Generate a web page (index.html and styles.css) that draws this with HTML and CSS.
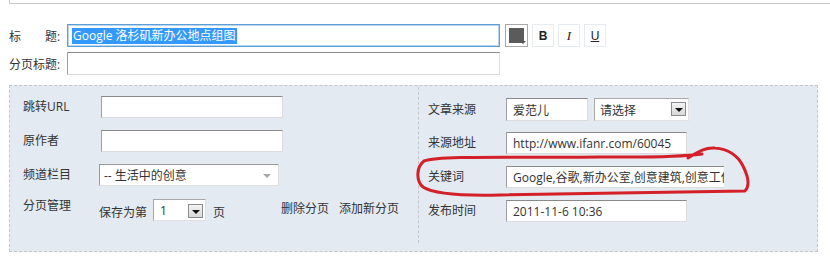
FILE: index.html
```html
<!DOCTYPE html>
<html lang="zh-CN">

<head>
    <meta charset="UTF-8" />
    <title>编辑文章</title>
    <link rel="stylesheet" href="styles.css">
</head>

<body>
    <div class="topbox"></div>

    <div class="head">
        <div class="head-row">
            <label class="head-label">标&emsp;&emsp;题:</label>
            <div class="box title-box"><span class="selected">Google 洛杉矶新办公地点组图</span></div>
            <div class="tools">
                <span class="color-btn"><i></i><b></b></span>
                <span class="fmt-btn bold">B</span>
                <span class="fmt-btn italic">I</span>
                <span class="fmt-btn under">U</span>
            </div>
        </div>
        <div class="head-row">
            <label class="head-label">分页标题:</label>
            <div class="box"></div>
        </div>
    </div>

    <div class="panel">
        <div class="col col-left">
            <div class="row">
                <label>跳转URL</label>
                <div class="box w182"></div>
            </div>
            <div class="row">
                <label>原作者</label>
                <div class="box w182"></div>
            </div>
            <div class="row">
                <label>频道栏目</label>
                <div class="box soft-select">-- 生活中的创意<span class="soft-arrow"></span></div>
            </div>
            <div class="row row-page">
                <label>分页管理</label>
                <div class="page-tools">
                    <span class="txt">保存为第</span>
                    <div class="box win-select page-no">1<span class="drop"></span></div>
                    <span class="txt">页</span>
                    <a class="link first">删除分页</a>
                    <a class="link">添加新分页</a>
                </div>
            </div>
        </div>

        <div class="col col-right">
            <div class="row">
                <label>文章来源</label>
                <div class="pair">
                    <div class="box w82">爱范儿</div>
                    <div class="box win-select source">请选择<span class="drop"></span></div>
                </div>
            </div>
            <div class="row">
                <label>来源地址</label>
                <div class="box w181">http://www.ifanr.com/60045</div>
            </div>
            <div class="row">
                <label>关键词</label>
                <div class="box keywords">Google,谷歌,新办公室,创意建筑,创意工作</div>
            </div>
            <div class="row">
                <label>发布时间</label>
                <div class="box w181">2011-11-6 10:36</div>
            </div>
        </div>

        <!-- 手绘的红圈 -->
        <svg class="mark" width="830" height="257" viewBox="0 0 830 257">
            <path d="M688 158 C698 152 706 147 715 148 C728 149 738 156 743 166 C748 176 750 186 745 191 C700 191 600 194 500 195 C460 196 432 193 423 187 C416 181 416 167 424 161 C440 155 520 158 600 157 C640 157 672 158 702 154"
                fill="none" stroke="#d42028" stroke-width="3" stroke-linecap="round" stroke-linejoin="round" />
        </svg>
    </div>
</body>

</html>
```

FILE: styles.css
```css
body {
    margin: 0;
    width: 830px;
    font-family: "Open Sans", "Noto Sans CJK SC", sans-serif;
    font-size: 12px;
    color: #333;
    background-color: #fff;
    position: relative;
}

.topbox {
    margin-left: 9px;
    height: 3px;
    border-left: 1px solid #c8c8c8;
    border-bottom: 1px solid #c8c8c8;
}

.head {
    margin-top: 20px;
    padding-left: 9px;
    display: grid;
    row-gap: 5px;
}

.head-row {
    display: flex;
    align-items: center;
    height: 23px;
}

.head-label {
    width: 58px;
    white-space: nowrap;
}

.box {
    box-sizing: border-box;
    height: 22px;
    display: flex;
    align-items: center;
    padding-left: 6px;
    background-color: #fff;
    border: 1px solid;
    border-color: #8a8a8a #dcdcdc #dcdcdc #a0a0a0;
    white-space: nowrap;
    overflow: hidden;
}

.head .box {
    width: 433px;
    height: 23px;
}

.head .title-box {
    border: 1px solid #5d9ed6;
    box-shadow: 0 0 0 1px #b9d6ef inset;
    padding-left: 4px;
}

.selected {
    background-color: #3399ff;
    color: #fff;
    line-height: 16px;
    padding: 0 1px;
}

.tools {
    display: flex;
    gap: 4px;
    margin-left: 5px;
}

.color-btn {
    box-sizing: border-box;
    width: 23px;
    height: 23px;
    border: 1px solid #a9a9a9;
    background-color: #fff;
    position: relative;
}

.color-btn i {
    position: absolute;
    left: 3px;
    top: 3px;
    width: 15px;
    height: 15px;
    background-color: #5b5b5b;
}

.color-btn b {
    position: absolute;
    right: 1px;
    bottom: 2px;
    border-left: 3px solid transparent;
    border-right: 3px solid transparent;
    border-top: 3px solid #555;
}

.fmt-btn {
    box-sizing: border-box;
    width: 22px;
    height: 23px;
    border: 1px solid #e6ebf1;
    background-color: #fff;
    display: flex;
    align-items: center;
    justify-content: center;
    font-family: "Liberation Sans", sans-serif;
    font-weight: bold;
    color: #222;
}

.fmt-btn.italic {
    font-family: "Liberation Serif", serif;
    font-style: italic;
    font-weight: normal;
    font-size: 13px;
}

.fmt-btn.under {
    font-weight: normal;
    text-decoration: underline;
}

.panel {
    margin: 10px 12px 0 9px;
    height: 165px;
    border: 1px dashed #c3c7cc;
    background-color: #e4eaf1;
    display: grid;
    grid-template-columns: 408px 1fr;
}

.col {
    display: grid;
    grid-auto-rows: 22px;
    row-gap: 12px;
    align-content: start;
}

.col-left {
    padding: 10px 0 0 13px;
}

.col-right {
    margin: 1px 0 8px;
    padding: 11px 0 0 9px;
    border-left: 1px dashed #c3c7cc;
}

.row {
    display: grid;
    grid-template-columns: 78px auto;
    align-items: center;
    justify-content: start;
}

.row label {
    margin-top: -2px;
    white-space: nowrap;
}

.w182 {
    width: 182px;
}

.w181 {
    width: 181px;
}

.w82 {
    width: 82px;
    height: 23px;
}

.soft-select {
    margin-left: -2px;
    width: 180px;
    padding-left: 4px;
    position: relative;
    border-color: #9a9a9a #e0e0e0 #e0e0e0 #9a9a9a;
}

.soft-arrow {
    position: absolute;
    right: 7px;
    top: 9px;
    border-left: 4px solid transparent;
    border-right: 4px solid transparent;
    border-top: 4px solid #a8a8a8;
}

.win-select {
    position: relative;
    height: 22px;
    border-color: #a8a8a8 #e0e0e0 #e0e0e0 #a8a8a8;
}

.drop {
    position: absolute;
    right: 2px;
    top: 3px;
    width: 15px;
    height: 14px;
    box-sizing: border-box;
    border: 1px solid #8c8c8c;
    background: linear-gradient(#f4f4f4, #d8d8d8);
}

.drop::after {
    content: "";
    position: absolute;
    left: 3px;
    top: 5px;
    border-left: 4px solid transparent;
    border-right: 4px solid transparent;
    border-top: 4px solid #111;
}

.row-page {
    align-items: start;
}

.page-tools {
    margin-left: -2px;
    margin-top: 1px;
    display: flex;
    align-items: center;
}

.page-tools .txt {
    margin-top: 4px;
}

.page-no {
    width: 53px;
    margin: 0 7px 0 6px;
    height: 22px;
}

.page-no .drop {
    top: 4px;
}

.link {
    color: #333;
    margin-top: -4px;
    margin-left: 10px;
    white-space: nowrap;
}

.link.first {
    margin-left: 56px;
}

.pair {
    display: flex;
    gap: 6px;
}

.source {
    width: 95px;
    height: 23px;
    padding-left: 5px;
}

.keywords {
    width: 218px;
    border-right: none;
}

.mark {
    position: absolute;
    left: 0;
    top: 0;
    pointer-events: none;
}
```
